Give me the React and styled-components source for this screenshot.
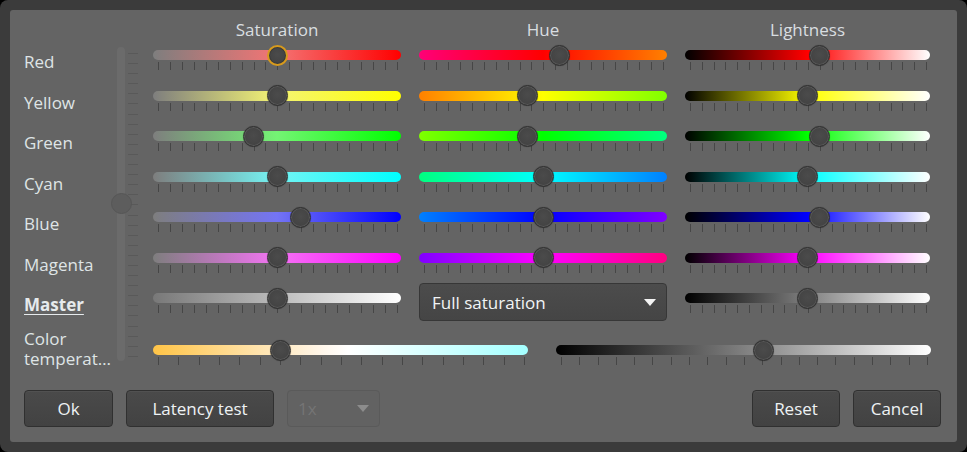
import React from 'react';
import styled, { createGlobalStyle, css } from 'styled-components';

const GlobalStyle = createGlobalStyle`
  html, body {
    margin: 0;
    padding: 0;
    background: #000;
  }
  body {
    font-family: "Open Sans", "Noto Sans", "Liberation Sans", sans-serif;
    font-size: 17px;
  }
`;

const mix = (c, w, t) => c.map((v, i) => Math.round(v * (1 - t) + w[i] * t));
const rgb = (c) => `rgb(${c.join(',')})`;

const rows = [
  { name: 'Red', c: [255, 0, 0], sat: 0.5, hue: 0.571, light: 0.555, from: '#ff0078', to: '#ff8000', focused: true },
  { name: 'Yellow', c: [255, 255, 0], sat: 0.5, hue: 0.431, light: 0.5, from: '#ff8000', to: '#80ff00' },
  { name: 'Green', c: [0, 255, 0], sat: 0.395, hue: 0.431, light: 0.555, from: '#80ff00', to: '#00ff80' },
  { name: 'Cyan', c: [0, 255, 255], sat: 0.5, hue: 0.5, light: 0.5, from: '#00ff80', to: '#0080ff' },
  { name: 'Blue', c: [0, 0, 255], sat: 0.605, hue: 0.5, light: 0.555, from: '#0080ff', to: '#8000ff' },
  { name: 'Magenta', c: [255, 0, 255], sat: 0.5, hue: 0.5, light: 0.5, from: '#8000ff', to: '#ff0080' },
];

const satGradient = (c) =>
  `linear-gradient(to right, #7e7e7e 0%, ${rgb(mix(c, [232, 232, 232], 0.5))} 50%, ${rgb(c)} 100%)`;
const hueGradient = (from, c, to) => `linear-gradient(to right, ${from} 0%, ${rgb(c)} 50%, ${to} 100%)`;
const lightGradient = (c) => `linear-gradient(to right, #000 0%, ${rgb(c)} 50%, #fff 100%)`;

const Frame = styled.div`
  width: 967px;
  height: 452px;
  box-sizing: border-box;
  padding: 10px;
  background: #3b3b3b;
  border-radius: 8px;
`;

const Panel = styled.div`
  height: 100%;
  box-sizing: border-box;
  background: #646464;
  border-radius: 3px;
  padding: 10px 16px 0 14px;
  color: #dfe4e6;
`;

const Main = styled.div`
  display: flex;
  height: 350px;
`;

const LabelCol = styled.div`
  width: 87px;
  padding-top: 20px;
  display: flex;
  flex-direction: column;
`;

const Label = styled.div`
  height: 40.5px;
  box-sizing: border-box;
  padding-top: 12px;
  line-height: 20px;
  white-space: nowrap;
  ${(p) =>
    p.$active &&
    css`
      font-weight: 700;
      text-decoration: underline;
      text-underline-offset: 3px;
      color: #e6eaec;
    `}
`;

const TempLabel = styled.div`
  margin-top: 5.5px;
  line-height: 20px;
  display: flex;
  flex-direction: column;
`;

const Clip = styled.span`
  display: block;
  width: 87px;
  overflow: hidden;
  white-space: nowrap;
  text-overflow: ellipsis;
`;

const VCol = styled.div`
  width: 42px;
  display: flex;
  align-items: flex-start;
`;

const VTrack = styled.div`
  position: relative;
  width: 8px;
  height: 314px;
  margin: 27px 0 0 6px;
  border-radius: 4px;
  background: #6b6b6b;
`;

const VThumb = styled.div`
  position: absolute;
  left: -6.5px;
  top: 145.5px;
  width: 21px;
  height: 21px;
  box-sizing: border-box;
  border-radius: 50%;
  background: #5d5d5d;
  border: 1px solid #565656;
`;

const VTicks = styled.div`
  margin: 33px 0 0 3px;
  height: 304px;
  display: flex;
  flex-direction: column;
  justify-content: space-between;
`;

const VTick = styled.div`
  width: 10px;
  height: 1px;
  background: #595959;
`;

const RightCol = styled.div`
  width: 778px;
  display: flex;
  flex-direction: column;
`;

const Grid = styled.div`
  display: grid;
  grid-template-columns: 248px 248px 245px;
  column-gap: 18px;
  grid-auto-rows: 40.5px;
`;

const Header = styled.div`
  display: grid;
  grid-template-columns: 248px 248px 245px;
  column-gap: 18px;
  line-height: 20px;
  height: 20px;
  text-align: center;
  color: #d9dee0;
`;

const TempRow = styled.div`
  display: grid;
  grid-template-columns: 375px 375px;
  column-gap: 28px;
  margin-top: 11.5px;
`;

const SliderBox = styled.div`
  padding-top: 10px;
`;

const Track = styled.div`
  position: relative;
  height: 10px;
  border-radius: 5px;
  background: ${(p) => p.$bg};
`;

const Thumb = styled.div`
  position: absolute;
  top: -5.5px;
  width: 21px;
  height: 21px;
  box-sizing: border-box;
  border-radius: 50%;
  background: radial-gradient(circle at 50% 45%, #4b4b4b 0%, #444 60%, #3c3c3c 100%);
  border: 1px solid #2f2f2f;
  box-shadow: inset 0 0 0 1px #585858, 0 0 1px rgba(0, 0, 0, 0.4);
  ${(p) =>
    p.$focused &&
    css`
      border: 2px solid #d79a1c;
      box-shadow: inset 0 0 0 1px #3a3a3a;
    `}
`;

const Ticks = styled.div`
  display: flex;
  justify-content: space-between;
  margin-top: 2px;
  padding: 0 3px 0 5px;
`;

const Tick = styled.div`
  width: 1px;
  height: 8px;
  background: #464646;
`;

const Slider = ({ bg, value, ticks = 21, focused }) => (
  <SliderBox>
    <Track $bg={bg}>
      <Thumb $focused={focused} style={{ left: `calc(${value * 100}% - ${value * 20}px - 0.5px)` }} />
    </Track>
    <Ticks>
      {Array.from({ length: ticks }, (_, i) => (
        <Tick key={i} />
      ))}
    </Ticks>
  </SliderBox>
);

const Select = styled.div`
  height: 38px;
  box-sizing: border-box;
  display: flex;
  align-items: center;
  justify-content: space-between;
  padding: 0 10px 0 12px;
  border-radius: 4px;
  border: 1px solid #373737;
  background: linear-gradient(to bottom, #4c4c4c, #454545);
  color: #f1f4f5;
  ${(p) =>
    p.$disabled &&
    css`
      background: #626262;
      border-color: #5a5a5a;
      color: #757575;
      padding: 0 10px 0 10px;
    `}
`;

const Arrow = styled.span`
  width: 0;
  height: 0;
  border-left: 6px solid transparent;
  border-right: 6px solid transparent;
  border-top: 7px solid ${(p) => (p.$disabled ? '#8c8c8c' : '#f4f4f4')};
`;

const Buttons = styled.div`
  display: flex;
  gap: 13px;
  margin-top: 20px;
`;

const Spacer = styled.div`
  flex: 1;
`;

const Button = styled.button`
  height: 37px;
  width: ${(p) => p.$w || 88}px;
  padding: 0;
  font: inherit;
  color: #eef2f4;
  border: 1px solid #303030;
  border-radius: 4px;
  background: linear-gradient(to bottom, #4a4a4a, #424242);
  box-shadow: inset 0 1px 0 #515151;
`;

const SmallSelect = styled(Select)`
  width: 93px;
  height: 37px;
`;

export default function App() {
  return (
    <>
      <GlobalStyle />
      <Frame>
        <Panel>
          <Main>
            <LabelCol>
              {rows.map((r) => (
                <Label key={r.name}>{r.name}</Label>
              ))}
              <Label $active>Master</Label>
              <TempLabel>
                <span>Color</span>
                <Clip>temperature</Clip>
              </TempLabel>
            </LabelCol>
            <VCol>
              <VTrack>
                <VThumb />
              </VTrack>
              <VTicks>
                {Array.from({ length: 31 }, (_, i) => (
                  <VTick key={i} />
                ))}
              </VTicks>
            </VCol>
            <RightCol>
              <Header>
                <span>Saturation</span>
                <span>Hue</span>
                <span>Lightness</span>
              </Header>
              <Grid>
                {rows.map((r) => (
                  <React.Fragment key={r.name}>
                    <Slider bg={satGradient(r.c)} value={r.sat} focused={r.focused} />
                    <Slider bg={hueGradient(r.from, r.c, r.to)} value={r.hue} />
                    <Slider bg={lightGradient(r.c)} value={r.light} />
                  </React.Fragment>
                ))}
                <Slider bg="linear-gradient(to right, #787878, #fff)" value={0.5} />
                <Select>
                  <span>Full saturation</span>
                  <Arrow />
                </Select>
                <Slider bg="linear-gradient(to right, #000, #808080 50%, #fff)" value={0.5} />
              </Grid>
              <TempRow>
                <Slider bg="linear-gradient(to right, #ffc447 0%, #fff6ea 45%, #fff 52%, #a4ffff 100%)" value={0.33} ticks={19} />
                <Slider bg="linear-gradient(to right, #000, #fff)" value={0.555} />
              </TempRow>
            </RightCol>
          </Main>
          <Buttons>
            <Button $w={89}>Ok</Button>
            <Button $w={148}>Latency test</Button>
            <SmallSelect $disabled>
              <span>1x</span>
              <Arrow $disabled />
            </SmallSelect>
            <Spacer />
            <Button>Reset</Button>
            <Button>Cancel</Button>
          </Buttons>
        </Panel>
      </Frame>
    </>
  );
}
